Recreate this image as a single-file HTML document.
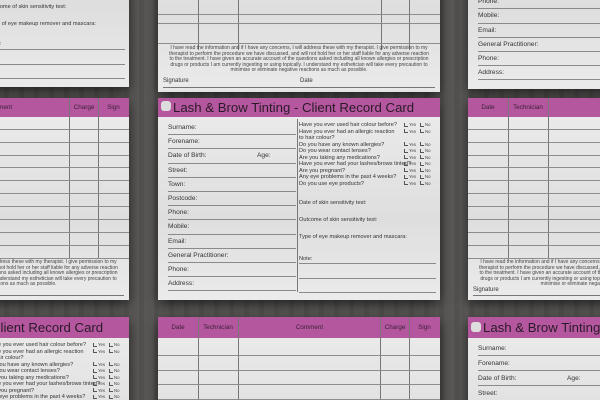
<!DOCTYPE html>
<html><head><meta charset="utf-8"><style>
*{margin:0;padding:0;box-sizing:border-box}
html,body{width:600px;height:400px;overflow:hidden}
body{position:relative;font-family:"Liberation Sans",sans-serif;
background:#575553;background-image:repeating-linear-gradient(90deg,rgba(255,255,255,.025) 0 4px,rgba(0,0,0,.04) 4px 9px,rgba(255,255,255,.015) 9px 15px);}
.card{position:absolute;width:282px;height:202px;background:linear-gradient(180deg,#ececec,#dedede 60%,#ebebeb);box-shadow:0 4px 12px rgba(0,0,0,.65);overflow:hidden;color:#333}
.hd{position:absolute;left:0;top:0;width:282px;height:19px;background:#b4579f}
.ttl{position:absolute;left:15px;top:2px;font-size:13.2px;color:#2a1a28;white-space:nowrap}
.sq{position:absolute;left:3px;top:3px;width:10px;height:10px;border-radius:3px;background:#ddd}
.lab{position:absolute;left:10px;width:128px;height:14.2px;border-bottom:1px solid #8a8a8a;font-size:6.6px;line-height:14px;color:#333}
.vd{position:absolute;left:139px;top:21px;width:1px;height:173px;background:#777}
.q{position:absolute;left:141px;font-size:5.6px;line-height:6.5px;white-space:nowrap;color:#333}
.yn{position:absolute;font-size:4.3px;line-height:6.5px;color:#444;white-space:nowrap}
.yn i{display:inline-block;width:4px;height:4px;border:0.6px solid #555;border-top:none;border-right:none;margin-right:1px;vertical-align:-0.5px}
.rl{position:absolute;left:141px;width:137px;height:1px;background:#8a8a8a}
.ch{position:absolute;top:0;height:19px;font-size:6.3px;line-height:19px;color:#3a1f35;text-align:center}
.vl{position:absolute;top:0;width:1px;height:160px;background:#777}
.hl{position:absolute;left:0;width:282px;height:1px;background:#8d8d8d}
.disc{position:absolute;left:10px;top:162px;width:262px;font-size:5px;line-height:5.6px;text-align:center;color:#444}
.sig{position:absolute;top:189px;font-size:6px;color:#333}
.sl{position:absolute;left:5px;top:197px;width:272px;height:1px;background:#777}
</style></head><body>

<div class="card" style="left:-153px;top:-115px">
<div class="hd"><div class="sq"></div><div class="ttl">Lash &amp; Brow Tinting - Client Record Card</div></div>
<div class="vd"></div>
<div class="q" style="top:102px">Date of skin sensitivity test:</div>
<div class="q" style="top:119px">Outcome of skin sensitivity test:</div>
<div class="q" style="top:136px">Type of eye makeup remover and mascara:</div>
<div class="q" style="top:156px">Note:</div>
<div class="rl" style="top:164px"></div><div class="rl" style="top:179px"></div><div class="rl" style="top:193px"></div>
</div>

<div class="card" style="left:468px;top:-113px">
<div class="hd"><div class="sq"></div><div class="ttl">Lash &amp; Brow Tinting - Client Record Card</div></div>
<div class="lab" style="top:23px">Surname:</div><div class="lab" style="top:37.2px">Forename:</div>
<div class="lab" style="top:51.4px">Date of Birth:<span style="position:absolute;left:89px">Age:</span></div>
<div class="lab" style="top:65.6px">Street:</div><div class="lab" style="top:79.8px">Town:</div>
<div class="lab" style="top:94px">Postcode:</div><div class="lab" style="top:108.2px">Phone:</div>
<div class="lab" style="top:122.4px">Mobile:</div><div class="lab" style="top:136.6px">Email:</div>
<div class="lab" style="top:150.8px">General Practitioner:</div><div class="lab" style="top:165px">Phone:</div>
<div class="lab" style="top:179.2px">Address:</div>
<div class="vd"></div>
</div>

<div class="card" style="left:158px;top:-110px">
<div class="hd"></div>
<div class="vl" style="left:40px"></div><div class="vl" style="left:80px"></div><div class="vl" style="left:223px"></div><div class="vl" style="left:251px"></div>
<div class="hl" style="top:95px"></div><div class="hl" style="top:108px"></div><div class="hl" style="top:124px"></div><div class="hl" style="top:133px"></div><div class="hl" style="top:153px"></div>
<div class="disc" style="top:156px">I have read the information and if I have any concerns, I will address these with my therapist. I give permission to my therapist to perform the procedure we have discussed, and will not hold her or her staff liable for any adverse reaction to the treatment. I have given an accurate account of the questions asked including all known allergies or prescription drugs or products I am currently ingesting or using topically. I understand my esthetician will take every precaution to minimise or eliminate negative reactions as much as possible.</div>
<div class="sig" style="left:5px;top:188px">Signature</div><div class="sig" style="left:142px;top:188px">Date</div><div class="sl"></div>
</div>

<div class="card" style="left:-153px;top:98px">
<div class="hd"></div>
<div class="ch" style="left:80px;width:143px">Comment</div><div class="ch" style="left:223px;width:28px">Charge</div><div class="ch" style="left:251px;width:31px">Sign</div>
<div class="vl" style="left:40px"></div><div class="vl" style="left:80px"></div><div class="vl" style="left:222px"></div><div class="vl" style="left:251px"></div>
<div class="hl" style="top:31px"></div><div class="hl" style="top:44px"></div><div class="hl" style="top:57px"></div><div class="hl" style="top:69px"></div><div class="hl" style="top:82px"></div><div class="hl" style="top:95px"></div><div class="hl" style="top:108px"></div><div class="hl" style="top:121px"></div><div class="hl" style="top:134px"></div><div class="hl" style="top:147px"></div><div class="hl" style="top:160px"></div>
<div class="disc">I have read the information and if I have any concerns, I will address these with my therapist. I give permission to my therapist to perform the procedure we have discussed, and will not hold her or her staff liable for any adverse reaction to the treatment. I have given an accurate account of the questions asked including all known allergies or prescription drugs or products I am currently ingesting or using topically. I understand my esthetician will take every precaution to minimise or eliminate negative reactions as much as possible.</div>
<div class="sl"></div>
</div>

<div class="card" style="left:158px;top:98px">
<div class="hd"><div class="sq"></div><div class="ttl">Lash &amp; Brow Tinting - Client Record Card</div></div>
<div class="lab" style="top:23px">Surname:</div><div class="lab" style="top:37.2px">Forename:</div>
<div class="lab" style="top:51.4px">Date of Birth:<span style="position:absolute;left:89px">Age:</span></div>
<div class="lab" style="top:65.6px">Street:</div><div class="lab" style="top:79.8px">Town:</div>
<div class="lab" style="top:94px">Postcode:</div><div class="lab" style="top:108.2px">Phone:</div>
<div class="lab" style="top:122.4px">Mobile:</div><div class="lab" style="top:136.6px">Email:</div>
<div class="lab" style="top:150.8px">General Practitioner:</div><div class="lab" style="top:165px">Phone:</div>
<div class="lab" style="top:179.2px">Address:</div>
<div class="vd"></div>
<div class="q" style="top:24px">Have you ever used hair colour before?<br>Have you ever had an allergic reaction<br>to hair colour?<br>Do you have any known allergies?<br>Do you wear contact lenses?<br>Are you taking any medications?<br>Have you ever had your lashes/brows tinted?<br>Are you pregnant?<br>Any eye problems in the past 4 weeks?<br>Do you use eye products?</div>
<div class="yn" style="left:246px;top:24px"><i></i>Yes<br><i></i>Yes<br>&nbsp;<br><i></i>Yes<br><i></i>Yes<br><i></i>Yes<br><i></i>Yes<br><i></i>Yes<br><i></i>Yes<br><i></i>Yes</div>
<div class="yn" style="left:262px;top:24px"><i></i>No<br><i></i>No<br>&nbsp;<br><i></i>No<br><i></i>No<br><i></i>No<br><i></i>No<br><i></i>No<br><i></i>No<br><i></i>No</div>
<div class="q" style="top:102px">Date of skin sensitivity test:</div>
<div class="q" style="top:119px">Outcome of skin sensitivity test:</div>
<div class="q" style="top:136px">Type of eye makeup remover and mascara:</div>
<div class="q" style="top:158px">Note:</div>
<div class="rl" style="top:165px"></div><div class="rl" style="top:180px"></div><div class="rl" style="top:194px"></div>
</div>

<div class="card" style="left:468px;top:98px">
<div class="hd"></div>
<div class="ch" style="left:0;width:40px">Date</div><div class="ch" style="left:40px;width:40px">Technician</div><div class="ch" style="left:80px;width:143px">Comment</div>
<div class="vl" style="left:40px"></div><div class="vl" style="left:80px"></div><div class="vl" style="left:222px"></div><div class="vl" style="left:251px"></div>
<div class="hl" style="top:31px"></div><div class="hl" style="top:44px"></div><div class="hl" style="top:57px"></div><div class="hl" style="top:69px"></div><div class="hl" style="top:82px"></div><div class="hl" style="top:95px"></div><div class="hl" style="top:108px"></div><div class="hl" style="top:121px"></div><div class="hl" style="top:134px"></div><div class="hl" style="top:147px"></div><div class="hl" style="top:160px"></div>
<div class="disc">I have read the information and if I have any concerns, I will address these with my therapist. I give permission to my therapist to perform the procedure we have discussed, and will not hold her or her staff liable for any adverse reaction to the treatment. I have given an accurate account of the questions asked including all known allergies or prescription drugs or products I am currently ingesting or using topically. I understand my esthetician will take every precaution to minimise or eliminate negative reactions as much as possible.</div>
<div class="sig" style="left:5px">Signature</div><div class="sl"></div>
</div>

<div class="card" style="left:-153px;top:317px">
<div class="hd" style="height:21px"><div class="sq" style="top:4px"></div><div class="ttl" style="top:3px">Lash &amp; Brow Tinting - Client Record Card</div></div>
<div class="vd"></div>
<div class="q" style="top:25px">Have you ever used hair colour before?<br>Have you ever had an allergic reaction<br>to hair colour?<br>Do you have any known allergies?<br>Do you wear contact lenses?<br>Are you taking any medications?<br>Have you ever had your lashes/brows tinted?<br>Are you pregnant?<br>Any eye problems in the past 4 weeks?<br>Do you use eye products?</div>
<div class="yn" style="left:246px;top:25px"><i></i>Yes<br><i></i>Yes<br>&nbsp;<br><i></i>Yes<br><i></i>Yes<br><i></i>Yes<br><i></i>Yes<br><i></i>Yes<br><i></i>Yes<br><i></i>Yes</div>
<div class="yn" style="left:262px;top:25px"><i></i>No<br><i></i>No<br>&nbsp;<br><i></i>No<br><i></i>No<br><i></i>No<br><i></i>No<br><i></i>No<br><i></i>No<br><i></i>No</div>
</div>

<div class="card" style="left:158px;top:317px">
<div class="hd" style="height:21px"></div>
<div class="ch" style="left:0;width:40px;height:21px;line-height:21px">Date</div><div class="ch" style="left:40px;width:40px;height:21px;line-height:21px">Technician</div><div class="ch" style="left:80px;width:143px;height:21px;line-height:21px">Comment</div><div class="ch" style="left:223px;width:28px;height:21px;line-height:21px">Charge</div><div class="ch" style="left:251px;width:31px;height:21px;line-height:21px">Sign</div>
<div class="vl" style="left:40px"></div><div class="vl" style="left:80px"></div><div class="vl" style="left:222px"></div><div class="vl" style="left:251px"></div>
<div class="hl" style="top:38px"></div><div class="hl" style="top:53px"></div><div class="hl" style="top:67px"></div><div class="hl" style="top:82px"></div>
</div>

<div class="card" style="left:468px;top:317px">
<div class="hd" style="height:21px"><div class="sq" style="top:5px"></div><div class="ttl" style="top:3px">Lash &amp; Brow Tinting - Client Record Card</div></div>
<div class="lab" style="top:25px">Surname:</div><div class="lab" style="top:40px">Forename:</div>
<div class="lab" style="top:55px">Date of Birth:<span style="position:absolute;left:89px">Age:</span></div>
<div class="lab" style="top:70px">Street:</div>
</div>

</body></html>
